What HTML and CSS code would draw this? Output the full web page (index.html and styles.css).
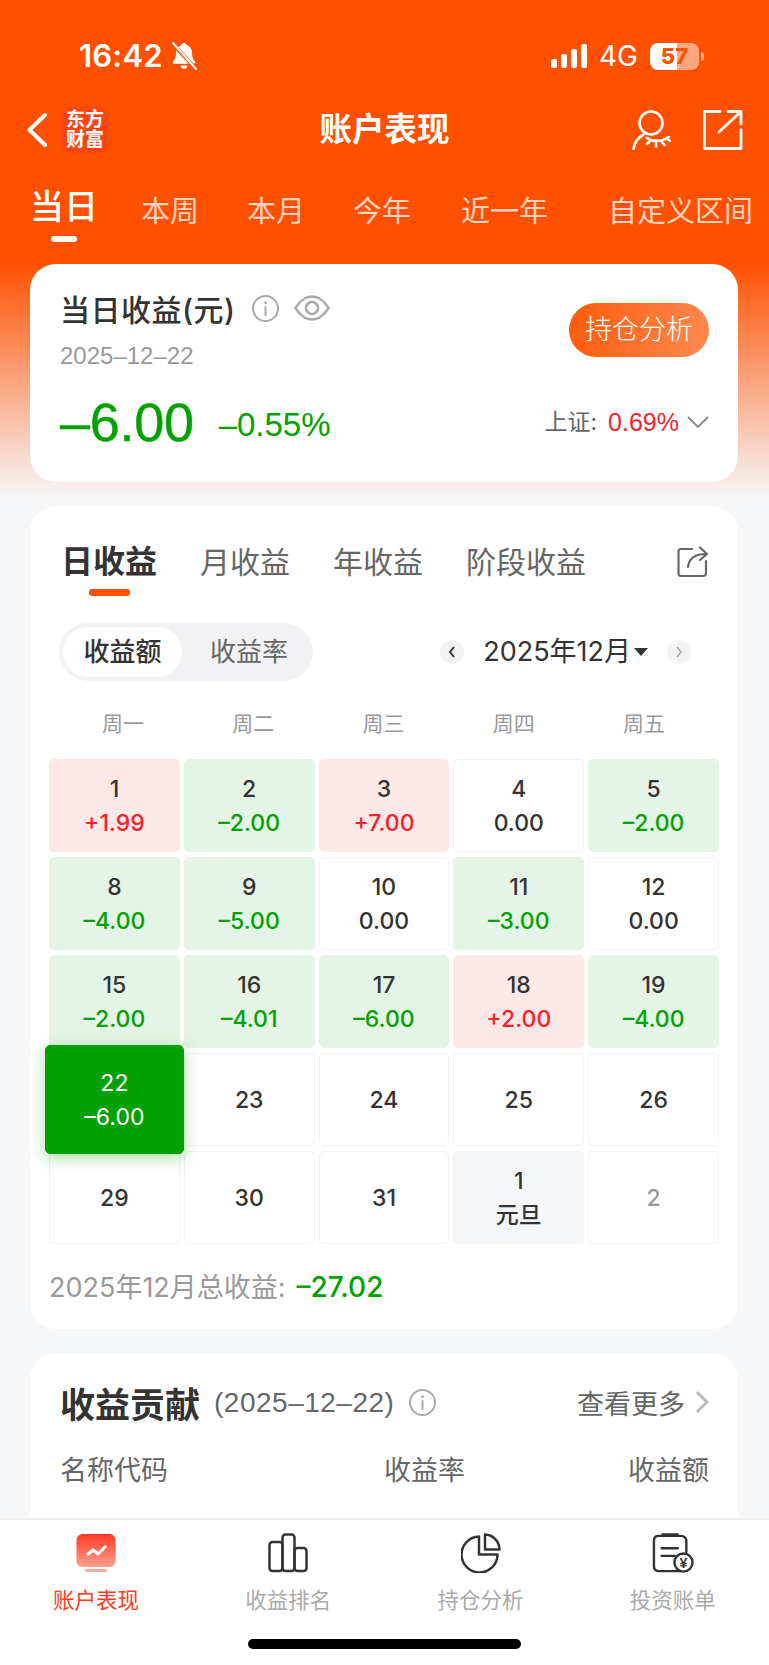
FILE: index.html
```html
<!DOCTYPE html>
<html lang="zh-CN">
<head>
<meta charset="utf-8">
<title>账户表现</title>
<link rel="stylesheet" href="styles.css">
</head>
<body>
<div class="app">
  <div class="status">
    <div class="status-left">
      <span class="time">16:42</span>
      <svg class="bell" viewBox="0 0 26 28"><path fill="#fff" d="M13 1c-1.500 0-2.500 1-2.700 2.300C6.500 4.400 5 7.500 5 11c0 4-1 6.500-3 8.500-.8.800-.3 2.300 1 2.300h20c1.300 0 1.800-1.500 1-2.300-2-2-3-4.500-3-8.500 0-3.500-1.500-6.600-5.300-7.700C15.500 2 14.500 1 13 1zM9.500 23.500c.4 2 1.800 3.500 3.500 3.500s3.100-1.500 3.500-3.500z"/><path stroke="#ff5000" stroke-width="4" d="M1 1l24 26"/><path stroke="#fff" stroke-width="2" stroke-linecap="round" d="M2 1l23 26"/></svg>
    </div>
    <div class="status-right">
      <div class="signal"><i class="b1"></i><i class="b2"></i><i class="b3"></i><i class="b4"></i></div>
      <span class="net">4G</span>
      <div class="battery"><span>57</span></div>
      <i class="nub"></i>
    </div>
  </div>

  <div class="nav">
    <div class="nav-left">
      <svg class="back" viewBox="0 0 20 34"><path fill="none" stroke="#fff" stroke-width="4" stroke-linecap="round" stroke-linejoin="round" d="M18 2L2.500 17 18 32"/></svg>
      <div class="logo">东方<br>财富</div>
    </div>
    <div class="nav-title">账户表现</div>
    <div class="nav-right">
      <svg class="ic40" viewBox="0 0 40 40" fill="none" stroke="#fff" stroke-width="2.600" stroke-linecap="round"><circle cx="20" cy="13" r="11.500"/><path d="M2.500 39C3.500 32 7 27.500 12.500 24.500"/><path d="M16 28c5 4 14 4 22-1M19 31l-3 3M25 33v3.500M31 32l2.500 3M36 29l3 2"/></svg>
      <svg class="ic40" viewBox="0 0 40 40" fill="none" stroke="#fff" stroke-width="2.800" stroke-linecap="round" stroke-linejoin="round"><path d="M17 1.500H1.500v37H38V20"/><path d="M25 1.500h13V14M16 22L37 2.500"/></svg>
    </div>
  </div>

  <div class="periods">
    <div class="period period-on">当日<i></i></div>
    <div class="period">本周</div>
    <div class="period">本月</div>
    <div class="period">今年</div>
    <div class="period period-year">近一年</div>
    <div class="period period-last">自定义区间</div>
  </div>

  <div class="content">
    <section class="card hero">
      <div class="hero-top">
        <div>
          <div class="hero-title">
            <span>当日收益(元)</span>
            <svg class="info" viewBox="0 0 27 27" fill="none" stroke="#aaa" stroke-width="2"><circle cx="13.500" cy="13.500" r="12.500"/><path stroke-linecap="round" d="M13.500 12v8"/><path stroke-linecap="round" stroke-width="2.600" d="M13.500 7.500v.2"/></svg>
            <svg class="eye" viewBox="0 0 36 26" fill="none" stroke="#aaa" stroke-width="2.600"><path stroke-linejoin="round" d="M1.500 13C8 3 13 1.500 18 1.500S28 3 34.500 13C28 23 23 24.500 18 24.500S8 23 1.500 13z"/><circle cx="18" cy="13" r="6"/></svg>
          </div>
          <div class="hero-date">2025–12–22</div>
        </div>
        <div class="hold-btn">持仓分析</div>
      </div>
      <div class="hero-bottom">
        <div class="hero-nums"><span class="big">–6.00</span><span class="pct">–0.55%</span></div>
        <div class="index">
          <span class="index-name">上证:</span><span class="index-val">0.69%</span>
          <svg class="chev" viewBox="0 0 22 13" fill="none" stroke="#888" stroke-width="1.800"><path d="M1 1l10 10L21 1"/></svg>
        </div>
      </div>
    </section>

    <section class="card main">
      <div class="tabs">
        <div class="tab tab-on">日收益<i></i></div>
        <div class="tab">月收益</div>
        <div class="tab">年收益</div>
        <div class="tab">阶段收益</div>
        <svg class="share" viewBox="0 0 32 32" fill="none" stroke="#666" stroke-width="2.200" stroke-linecap="round" stroke-linejoin="round"><path d="M15 3H4Q1.500 3 1.500 5.500V27Q1.500 30 4 30H26Q29 30 29 27V15"/><path d="M11 21C12 12 18 8 29 8M23 1.500L30 8l-7 6"/></svg>
      </div>
      <div class="controls">
        <div class="toggle"><div class="toggle-on">收益额</div><div class="toggle-off">收益率</div></div>
        <div class="month">
          <span class="round"><svg viewBox="0 0 10 14" fill="none" stroke="#333" stroke-width="2"><path d="M7 2L3 7l4 5"/></svg></span>
          <span class="month-text">2025年12月</span>
          <i class="caret"></i>
          <span class="round round-next"><svg viewBox="0 0 10 14" fill="none" stroke="#aaa" stroke-width="1.500"><path d="M3 2l4 5-4 5"/></svg></span>
        </div>
      </div>
      <div class="weekdays"><span>周一</span><span>周二</span><span>周三</span><span>周四</span><span>周五</span></div>
      <div class="cal">
        <div class="cell up"><b>1</b><em>+1.99</em></div>
        <div class="cell down"><b>2</b><em>–2.00</em></div>
        <div class="cell up"><b>3</b><em>+7.00</em></div>
        <div class="cell"><b>4</b><em>0.00</em></div>
        <div class="cell down"><b>5</b><em>–2.00</em></div>
        <div class="cell down"><b>8</b><em>–4.00</em></div>
        <div class="cell down"><b>9</b><em>–5.00</em></div>
        <div class="cell"><b>10</b><em>0.00</em></div>
        <div class="cell down"><b>11</b><em>–3.00</em></div>
        <div class="cell"><b>12</b><em>0.00</em></div>
        <div class="cell down"><b>15</b><em>–2.00</em></div>
        <div class="cell down"><b>16</b><em>–4.01</em></div>
        <div class="cell down"><b>17</b><em>–6.00</em></div>
        <div class="cell up"><b>18</b><em>+2.00</em></div>
        <div class="cell down"><b>19</b><em>–4.00</em></div>
        <div class="cell today"><b>22</b><em>–6.00</em></div>
        <div class="cell"><b>23</b></div>
        <div class="cell"><b>24</b></div>
        <div class="cell"><b>25</b></div>
        <div class="cell"><b>26</b></div>
        <div class="cell"><b>29</b></div>
        <div class="cell"><b>30</b></div>
        <div class="cell"><b>31</b></div>
        <div class="cell holiday"><b>1</b><em>元旦</em></div>
        <div class="cell next"><b>2</b></div>
      </div>
      <div class="total"><span class="total-label">2025年12月总收益:</span><span class="total-val">–27.02</span></div>
    </section>

    <section class="card contrib">
      <div class="contrib-head">
        <div class="contrib-left">
          <span class="contrib-title">收益贡献</span>
          <span class="contrib-date">(2025–12–22)</span>
          <svg class="info" viewBox="0 0 27 27" fill="none" stroke="#aaa" stroke-width="2"><circle cx="13.500" cy="13.500" r="12.500"/><path stroke-linecap="round" d="M13.500 12v8"/><path stroke-linecap="round" stroke-width="2.600" d="M13.500 7.500v.2"/></svg>
        </div>
        <div class="more">查看更多<svg class="more-chev" viewBox="0 0 14 24" fill="none" stroke="#bbb" stroke-width="3"><path d="M2 2l10 10L2 22"/></svg></div>
      </div>
      <div class="cols"><span>名称代码</span><span class="col-mid">收益率</span><span>收益额</span></div>
    </section>
  </div>

  <nav class="tabbar">
    <div class="bar-items">
      <div class="bar-item bar-on">
        <svg class="bar-ic" viewBox="0 0 40 40"><defs><linearGradient id="mon" x1="0" y1="0" x2="0" y2="1"><stop offset="0" stop-color="#ff3a22"/><stop offset="1" stop-color="#ff9f90"/></linearGradient></defs><rect x="0.500" y="1" width="39" height="33" rx="6" fill="url(#mon)"/><rect x="9" y="36" width="22" height="3" rx="1" fill="#ffb0a2"/><path fill="none" stroke="#fff" stroke-width="3" d="M11 22l6-5 5 4 8-8"/></svg>
        <span>账户表现</span>
      </div>
      <div class="bar-item">
        <svg class="bar-ic" viewBox="0 0 40 40" fill="none" stroke="#333" stroke-width="2.500" stroke-linejoin="round"><rect x="1.500" y="9" width="13" height="29" rx="3"/><rect x="14.500" y="1.500" width="12" height="36.500" rx="3"/><rect x="26.500" y="15" width="12" height="23" rx="3"/></svg>
        <span>收益排名</span>
      </div>
      <div class="bar-item">
        <svg class="bar-ic" viewBox="0 0 40 40" fill="none" stroke="#333" stroke-width="2.500" stroke-linejoin="round"><path d="M18 3.500A18 18 0 1 0 36.500 21.500H18z"/><path d="M24 1.500A15 15 0 0 1 38.500 16.500H24z"/></svg>
        <span>持仓分析</span>
      </div>
      <div class="bar-item">
        <svg class="bar-ic bar-ic-wide" viewBox="0 0 44 42" fill="none" stroke="#333" stroke-width="2.500" stroke-linecap="round"><path d="M7 3H30Q36 3 36 9V20M23 40H7Q2 40 2 35V8Q2 3 7 3"/><path d="M24 40H30M11 1.500H27" /><path d="M10 16H27M10 24H24"/><circle cx="33" cy="31" r="9.500" fill="#fff"/><text x="33" y="36.500" text-anchor="middle" class="yen">¥</text></svg>
        <span>投资账单</span>
      </div>
    </div>
    <div class="home-row"><i class="home"></i></div>
  </nav>
</div>
</body>
</html>
```

FILE: styles.css
```css
* { box-sizing: border-box; margin: 0; padding: 0; }
html, body { width: 769px; height: 1665px; overflow: hidden; }
body {
  font-family: Inter, "Noto Sans CJK SC", sans-serif;
  color: #333;
  background: #f6f7f9;
}
i, em { font-style: normal; display: block; }
.app {
  width: 769px;
  height: 1665px;
  display: flex;
  flex-direction: column;
  background: linear-gradient(#ff5000 0, #ff5000 262px, #f6f7f9 498px);
}

/* status bar */
.status {
  flex: none;
  height: 90px;
  padding: 38px 65px 0 79px;
  display: flex;
  justify-content: space-between;
  align-items: flex-start;
  color: #fff;
}
.status-left { display: flex; align-items: center; gap: 8px; height: 36px; }
.time { font-size: 31px; font-weight: 600; line-height: 36px; letter-spacing: 0.2px; }
.bell { width: 26px; height: 28px; }
.status-right { display: flex; align-items: center; height: 36px; }
.signal { display: flex; align-items: flex-end; gap: 4px; height: 24px; margin-right: 12px; }
.signal i { width: 6px; background: #fff; border-radius: 2px; }
.b1 { height: 9px; } .b2 { height: 14px; } .b3 { height: 19px; } .b4 { height: 24px; }
.net { font-size: 28px; font-weight: 400; line-height: 36px; margin-right: 12px; }
.battery {
  width: 49px;
  height: 27px;
  border-radius: 8px;
  background: linear-gradient(90deg, #fff 0, #fff 27px, rgba(255,255,255,.5) 27px);
  display: flex;
  align-items: center;
  justify-content: center;
  color: #ff5000;
  font-size: 22px;
  font-weight: 800;
  line-height: 27px;
}
.nub { width: 3px; height: 9px; margin-left: 2px; border-radius: 0 3px 3px 0; background: rgba(255,255,255,.5); }

/* nav */
.nav {
  flex: none;
  height: 80px;
  padding: 0 26px;
  display: grid;
  grid-template-columns: 1fr auto 1fr;
  align-items: center;
}
.nav-left { display: flex; align-items: center; gap: 14px; }
.back { width: 22px; height: 34px; }
.logo {
  width: 46px;
  height: 46px;
  border-radius: 9px;
  background: #ff4412;
  color: #fff;
  font-size: 19px;
  font-weight: 700;
  line-height: 20px;
  text-align: center;
  padding-top: 3px;
}
.nav-title { font-size: 32.500px; font-weight: 700; color: #fff; line-height: 44px; }
.nav-right { display: flex; justify-content: flex-end; gap: 32px; }
.ic40 { width: 40px; height: 40px; }

/* period tabs */
.periods {
  flex: none;
  height: 94px;
  padding: 15px 0 0 30px;
  display: flex;
  align-items: flex-start;
  gap: 48px;
  color: rgba(255,255,255,.75);
  font-size: 29px;
  line-height: 40px;
  white-space: nowrap;
}
.period { padding-top: 7px; }
.period-on {
  position: relative;
  padding-top: 0;
  margin-right: -5px;
  color: #fff;
  font-size: 34px;
  font-weight: 500;
  line-height: 44px;
}
.period-on i {
  width: 26px;
  height: 6px;
  margin: 7px auto 0;
  border-radius: 3px;
  background: #fff;
}
.period-year { margin-left: 2px; }
.period-last { margin-left: 12px; }

/* cards */
.content {
  flex: 1;
  min-height: 0;
  overflow: hidden;
  padding: 0 31px 0 30px;
  display: flex;
  flex-direction: column;
  gap: 24px;
}
.card { flex: none; background: #fff; border-radius: 26px; }

.hero { height: 218px; padding: 22px 29px 0 30px; }
.hero-top { display: flex; justify-content: space-between; align-items: flex-start; }
.hero-title { display: flex; align-items: center; height: 44px; font-size: 30px; letter-spacing: .5px; font-weight: 500; color: #333; }
.info { width: 27px; height: 27px; flex: none; }
.hero-title .info { margin-left: 16px; }
.eye { width: 36px; height: 26px; margin-left: 15px; }
.hero-date { font-family: "Liberation Sans", sans-serif; font-size: 24px; line-height: 30px; color: #999; margin-top: 11px; }
.hold-btn {
  width: 140px;
  height: 54px;
  margin-top: 17px;
  border-radius: 27px;
  background: linear-gradient(100deg, #ff5a0a, #ff8a52);
  color: #fff;
  font-size: 27px;
  font-weight: 300;
  line-height: 54px;
  text-align: center;
}
.hero-bottom { display: flex; justify-content: space-between; align-items: center; margin-top: 19px; }
.hero-nums { display: flex; align-items: center; gap: 25px; font-family: "Liberation Sans", sans-serif; color: #02a102; }
.big { font-size: 54px; line-height: 64px; letter-spacing: -0.3px; -webkit-text-stroke: .4px #02a102; }
.pct { font-size: 33px; line-height: 40px; margin-top: 6px; }
.index { display: flex; align-items: center; font-size: 23px; line-height: 30px; margin-top: 0; }
.index-name { color: #666; }
.index-val { font-family: "Liberation Sans", sans-serif; color: #f5222d; font-size: 25px; margin-left: 11px; }
.chev { width: 22px; height: 13px; margin-left: 8px; }

.main { height: 823px; }
.tabs {
  height: 91px;
  padding: 34px 29px 0 31px;
  display: flex;
  align-items: flex-start;
  gap: 43px;
  font-size: 30px;
  line-height: 44px;
  color: #666;
  font-weight: 400;
}
.tab-on { color: #333; font-weight: 700; font-size: 32px; }
.tab-on i { width: 41px; height: 7px; margin: 5px auto 0; border-radius: 3px; background: #ff5000; }
.share { width: 32px; height: 32px; margin: 6px 0 0 auto; }

.controls { height: 58px; margin-top: 26px; padding: 0 47px 0 29px; display: flex; justify-content: space-between; align-items: center; }
.toggle { width: 254px; height: 58px; padding: 4px; border-radius: 29px; background: #f2f2f5; display: flex; font-size: 26px; line-height: 50px; text-align: center; }
.toggle-on { flex: none; width: 119px; border-radius: 25px; background: #fff; color: #333; font-weight: 500; }
.toggle-off { flex: none; width: 134px; color: #666; }
.month { display: flex; align-items: center; }
.round { width: 24px; height: 24px; border-radius: 50%; background: #f2f2f5; display: flex; align-items: center; justify-content: center; }
.round svg { width: 10px; height: 14px; }
.month-text { font-size: 27px; line-height: 40px; margin-left: 19px; color: #333; }
.caret { width: 0; height: 0; margin-left: 3px; border: 7px solid transparent; border-top: 8px solid #333; border-bottom: 0; }
.round-next { margin-left: 19px; }

.weekdays { margin-top: 27px; padding: 0 29px 0 28px; display: grid; grid-template-columns: repeat(5, 1fr); font-size: 21px; line-height: 32px; color: #999; text-align: center; }

.cal { margin-top: 19px; padding: 0 19px; display: grid; grid-template-columns: repeat(5, 1fr); grid-auto-rows: 93px; gap: 5px 4px; }
.cell {
  display: flex;
  flex-direction: column;
  justify-content: center;
  align-items: center;
  border: 1px solid #f1f1f1;
  border-radius: 5px;
  font-size: 23px;
  line-height: 34px;
  font-weight: 500;
  color: #333;
}
.cell b { font-weight: 500; }
.up { background: #fde8e8; border-color: #fde8e8; }
.up em { color: #f5222d; }
.down { background: #e4f4e6; border-color: #e4f4e6; }
.down em { color: #02a102; }
.holiday { background: #f5f6f8; border-color: #f5f6f8; }
.next b { color: #999; }
.today {
  position: relative;
  z-index: 2;
  margin: -8px -4px -8px;
  background: #02a102;
  border-color: #02a102;
  color: #fff;
  font-weight: 400;
  box-shadow: 0 4px 16px rgba(2,161,2,.35);
}
.today b { font-weight: 400; }

.total { margin-top: 23px; padding-left: 19px; display: flex; align-items: baseline; line-height: 40px; }
.total-label { font-size: 27px; color: #999; }
.total-val { font-size: 28px; font-weight: 500; color: #02a102; margin-left: 11px; }

.contrib { height: 240px; padding: 24px 29px 0 30px; }
.contrib-head { display: flex; justify-content: space-between; align-items: center; height: 50px; }
.contrib-left { display: flex; align-items: center; }
.contrib-title { font-size: 35px; font-weight: 700; color: #333; }
.contrib-date { font-family: "Liberation Sans", sans-serif; font-size: 28px; letter-spacing: .5px; line-height: 36px; padding-top: 2px; color: #666; margin-left: 14px; }
.contrib-left .info { margin-left: 15px; }
.more { display: flex; align-items: center; font-size: 27px; color: #666; }
.more-chev { width: 14px; height: 24px; margin-left: 10px; }
.cols { margin-top: 24px; display: grid; grid-template-columns: 324px 1fr auto; font-size: 27px; line-height: 40px; color: #666; }

/* bottom bar */
.tabbar { flex: none; height: 147px; background: #fff; border-top: 2px solid #eeeeee; }
.bar-items { display: grid; grid-template-columns: repeat(4, 1fr); height: 107px; padding-top: 13px; }
.bar-item { display: flex; flex-direction: column; align-items: center; font-size: 21.500px; line-height: 30px; color: #aaa; }
.bar-on { color: #ff3a22; }
.bar-ic { width: 40px; height: 40px; margin-bottom: 12px; }
.bar-ic-wide { width: 44px; }
.yen { font-family: "Liberation Sans", sans-serif; font-size: 15px; font-weight: 700; fill: #333; stroke: none; }
.home-row { display: flex; justify-content: center; padding-top: 12px; }
.home { width: 273px; height: 10px; border-radius: 5px; background: #000; }
```
